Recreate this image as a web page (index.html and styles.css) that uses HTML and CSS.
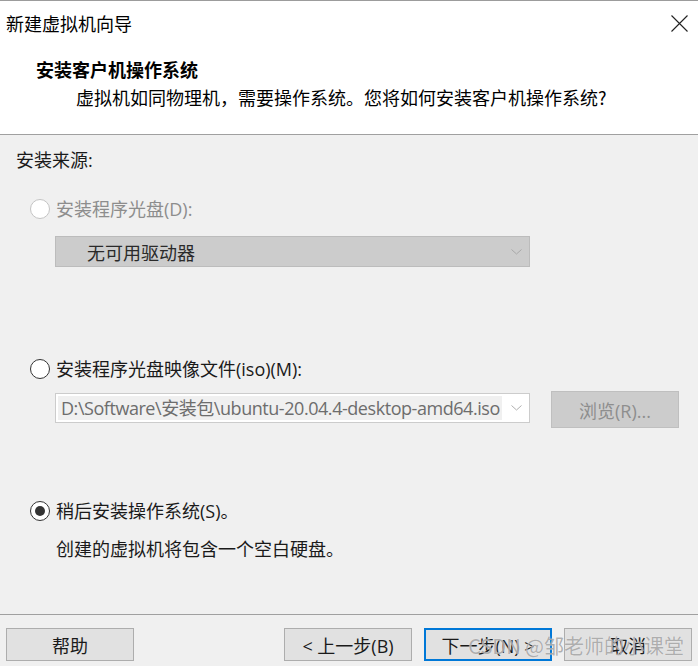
FILE: index.html
```html
<!DOCTYPE html>
<html lang="zh-CN">
<head>
<meta charset="utf-8">
<title>新建虚拟机向导</title>
<link rel="stylesheet" href="styles.css">
</head>
<body>
<div class="window">
  <div class="header">
    <div class="titlebar">
      <span class="title">新建虚拟机向导</span>
      <svg class="close" width="17" height="17" viewBox="0 0 17 17"><path d="M0.5 0.5 L16.5 16.5 M16.5 0.5 L0.5 16.5" stroke="#222" stroke-width="1.1" fill="none"/></svg>
    </div>
    <div class="heading">安装客户机操作系统</div>
    <div class="sub">虚拟机如同物理机，需要操作系统。您将如何安装客户机操作系统?</div>
  </div>
  <div class="body">
    <div class="label">安装来源:</div>

    <div class="radio-row r1 disabled">
      <span class="radio"></span>
      <span class="rtext">安装程序光盘(D):</span>
    </div>
    <div class="combo combo-disabled">
      <span class="ctext">无可用驱动器</span>
      <svg class="arrow" width="11" height="6" viewBox="0 0 11 6"><path d="M0.5 0.5 L5.5 5 L10.5 0.5" stroke="#a8a8a8" stroke-width="1" fill="none"/></svg>
    </div>

    <div class="radio-row r2">
      <span class="radio"></span>
      <span class="rtext">安装程序光盘映像文件(iso)(M):</span>
    </div>
    <div class="iso-row">
      <div class="combo combo-iso">
        <span class="ctext iso">D:\Software\安装包\ubuntu-20.04.4-desktop-amd64.iso</span>
        <svg class="arrow" width="11" height="6" viewBox="0 0 11 6"><path d="M0.5 0.5 L5.5 5 L10.5 0.5" stroke="#b0b0b0" stroke-width="1" fill="none"/></svg>
      </div>
      <div class="browse">浏览(R)...</div>
    </div>

    <div class="radio-row r3">
      <span class="radio checked"></span>
      <span class="rtext">稍后安装操作系统(S)。</span>
    </div>
    <div class="note">创建的虚拟机将包含一个空白硬盘。</div>
  </div>
  <div class="footer">
    <div class="btn">帮助</div>
    <div class="nav">
      <div class="btn">&lt; 上一步(B)</div>
      <div class="btn primary">下一步(N) &gt;</div>
      <div class="btn">取消</div>
    </div>
    <div class="watermark">CSDN @邹老师的小课堂</div>
  </div>
</div>
</body>
</html>
```

FILE: styles.css
```css
* { box-sizing: border-box; }
html, body { margin: 0; padding: 0; }
body {
  width: 698px;
  height: 666px;
  overflow: hidden;
  background: #f0f0f0;
  font-family: "Open Sans", "Noto Sans CJK SC", sans-serif;
  font-size: 18px;
  color: #1a1a1a;
}
.window {
  display: flex;
  flex-direction: column;
  height: 666px;
}
.header {
  background: #ffffff;
  border-top: 1px solid #9c9c9c;
  border-bottom: 1px solid #a0a0a0;
  height: 135px;
  padding-top: 10px;
}
.titlebar {
  display: flex;
  justify-content: space-between;
  align-items: center;
  height: 24px;
  line-height: 24px;
  padding-left: 6px;
  padding-right: 10px;
}
.title { font-family: "Noto Sans CJK SC", sans-serif; color: #000; }
.close { display: block; }
.heading {
  margin-top: 22px;
  padding-left: 36px;
  line-height: 24px;
  font-weight: bold;
  color: #000;
  font-family: "Noto Sans CJK SC", sans-serif;
}
.sub {
  margin-top: 4px;
  padding-left: 76px;
  line-height: 24px;
  color: #000;
  font-family: "Noto Sans CJK SC", sans-serif;
}
.body {
  height: 479px;
  padding-top: 13px;
  padding-left: 16px;
  display: flex;
  flex-direction: column;
  align-items: flex-start;
}
.label { line-height: 24px; color: #1a1a1a; }
.radio-row {
  display: flex;
  align-items: center;
  height: 24px;
  margin-left: 14px;
}
.r1 { margin-top: 25px; }
.r2 { margin-top: 90px; }
.r3 { margin-top: 71px; }
.radio {
  width: 20px;
  height: 20px;
  border-radius: 50%;
  border: 1px solid #333;
  background: #fff;
  display: flex;
  align-items: center;
  justify-content: center;
}
.radio.checked::after {
  content: "";
  width: 10px;
  height: 10px;
  border-radius: 50%;
  background: #333;
}
.rtext { margin-left: 6px; line-height: 24px; color: #1a1a1a; }
.disabled .radio { border-color: #c4c4c4; }
.disabled .rtext { color: #8d8d8d; }
.combo {
  width: 475px;
  height: 31px;
  display: flex;
  align-items: center;
  justify-content: space-between;
  margin-left: 39px;
}
.combo-disabled {
  margin-top: 15px;
  background: #cccccc;
  border: 1px solid #bcbcbc;
  padding-left: 31px;
  padding-right: 7px;
}
.combo-disabled .ctext { color: #2a2a2a; }
.iso-row {
  display: flex;
  align-items: flex-start;
  margin-top: 10px;
}
.combo-iso {
  margin-top: 2px;
  height: 30px;
  background: #fff;
  border: 1px solid #cccccc;
  padding: 2px 7px 2px 2px;
  align-items: stretch;
}
.ctext.iso {
  background: #f0f0f0;
  color: #6d6d6d;
  padding-left: 3px;
  width: 444px;
  line-height: 24px;
  white-space: nowrap;
  overflow: hidden;
  letter-spacing: -0.45px;
}
.combo-iso .arrow { align-self: center; }
.browse {
  margin-left: 21px;
  width: 128px;
  height: 37px;
  background: #cccccc;
  border: 1px solid #bfbfbf;
  color: #8e8e8e;
  display: flex;
  align-items: center;
  justify-content: center;
}
.note {
  margin-top: 14px;
  margin-left: 40px;
  line-height: 24px;
  color: #1a1a1a;
}
.footer {
  position: relative;
  border-top: 1px solid #a0a0a0;
  padding: 13px 6px 0 6px;
  display: flex;
  justify-content: space-between;
  align-items: flex-start;
  flex: 1;
}
.nav { display: flex; gap: 12px; }
.btn {
  width: 128px;
  height: 33px;
  background: #e1e1e1;
  border: 1px solid #adadad;
  display: flex;
  align-items: center;
  justify-content: center;
  color: #1a1a1a;
}
.btn.primary { border: 2px solid #0078d7; }
.watermark {
  position: absolute;
  right: 14px;
  top: 16px;
  font-family: "Noto Sans CJK SC", sans-serif;
  font-size: 20px;
  color: rgba(150, 150, 150, 0.75);
  text-shadow: 0 0 1px rgba(255,255,255,0.8);
  pointer-events: none;
}
```
